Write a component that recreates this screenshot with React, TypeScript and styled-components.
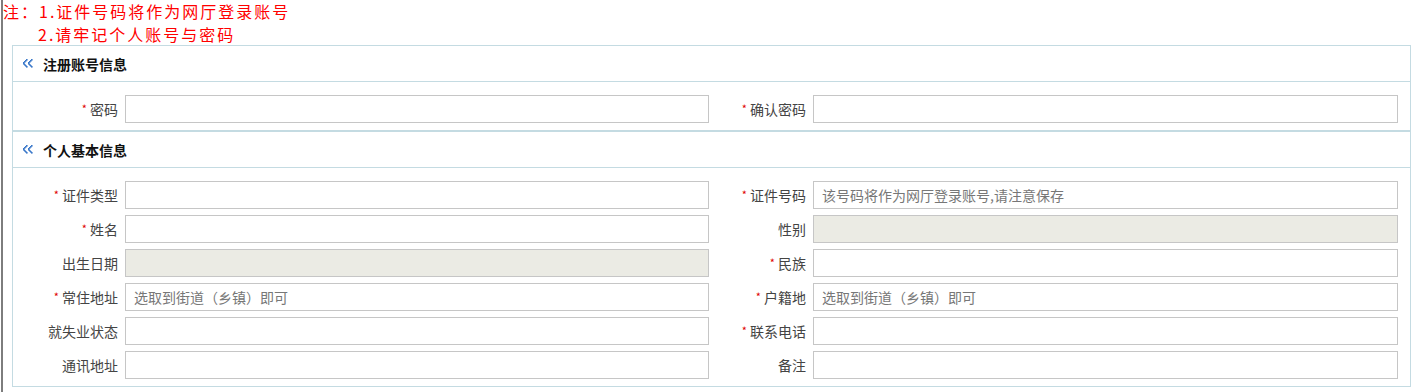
import styled, { createGlobalStyle } from 'styled-components';

const GlobalStyle = createGlobalStyle`
  html, body {
    margin: 0;
    padding: 0;
    background: #fff;
  }
  body {
    font-family: "Noto Sans CJK SC", "Liberation Sans", sans-serif;
  }
`;

type Field = {
  label: string;
  required?: boolean;
  placeholder?: string;
  disabled?: boolean;
};

const accountFields: Field[] = [
  { label: '密码', required: true },
  { label: '确认密码', required: true },
];

const personFields: Field[] = [
  { label: '证件类型', required: true },
  { label: '证件号码', required: true, placeholder: '该号码将作为网厅登录账号,请注意保存' },
  { label: '姓名', required: true },
  { label: '性别', disabled: true },
  { label: '出生日期', disabled: true },
  { label: '民族', required: true },
  { label: '常住地址', required: true, placeholder: '选取到街道（乡镇）即可' },
  { label: '户籍地', required: true, placeholder: '选取到街道（乡镇）即可' },
  { label: '就失业状态' },
  { label: '联系电话', required: true },
  { label: '通讯地址' },
  { label: '备注' },
];

// pixel-style double chevron, like the old gif icon
const Chevrons = () => (
  <svg width="10" height="9" viewBox="0 0 10 9">
    {[
      [3, 0], [2, 1], [1, 2], [0, 3], [0, 4], [1, 5], [2, 6], [3, 7],
      [8, 0], [7, 1], [6, 2], [5, 3], [5, 4], [6, 5], [7, 6], [8, 7],
    ].map(([x, y], i) => (
      <rect key={i} x={x} y={y} width="1.6" height="1.6" fill="#3a78c9" />
    ))}
  </svg>
);

const Section = ({ title, fields }: { title: string; fields: Field[] }) => (
  <Box>
    <SectionHead>
      <Chevrons />
      <span>{title}</span>
    </SectionHead>
    <FormGrid>
      {fields.map((f) => (
        <FieldPair key={f.label} field={f} />
      ))}
    </FormGrid>
  </Box>
);

const FieldPair = ({ field }: { field: Field }) => (
  <>
    <Label>
      {field.required && <Star>*</Star>}
      {field.label}
    </Label>
    <Input $disabled={field.disabled}>
      {field.placeholder && <Placeholder>{field.placeholder}</Placeholder>}
    </Input>
  </>
);

const App = () => {
  return (
    <Page>
      <GlobalStyle />
      <Note>
        <NoteLine>注：1.证件号码将作为网厅登录账号</NoteLine>
        <NoteLine $indent>2.请牢记个人账号与密码</NoteLine>
      </Note>
      <Panel>
        <Section title="注册账号信息" fields={accountFields} />
        <Section title="个人基本信息" fields={personFields} />
      </Panel>
    </Page>
  );
};

const Page = styled.div`
  margin-left: 1px;
  border-left: 2px solid #7d7d7d;
  min-height: 392px;
  box-sizing: border-box;
`;

const Note = styled.div`
  color: #ff0000;
  font-size: 16px;
  letter-spacing: 2px;
`;

const NoteLine = styled.div<{ $indent?: boolean }>`
  line-height: 22px;
  padding-left: ${(p) => (p.$indent ? '35px' : '0')};
  margin-top: ${(p) => (p.$indent ? '1px' : '0')};
`;

const Panel = styled.div`
  margin-left: 9px;
  width: 1399px;
  box-sizing: border-box;
`;

const Box = styled.div`
  border: 1px solid #c4dbe2;
`;

const SectionHead = styled.div`
  height: 35px;
  border-bottom: 1px solid #c4dbe2;
  display: flex;
  align-items: center;
  gap: 10px;
  padding-left: 10px;
  font-size: 14px;
  font-weight: bold;
  color: #111;
`;

const FormGrid = styled.div`
  display: grid;
  grid-template-columns: 112px 584px 104px 585px;
  grid-auto-rows: 28px;
  row-gap: 6px;
  padding: 13px 0 7px;
`;

const Label = styled.div`
  display: flex;
  align-items: center;
  justify-content: flex-end;
  padding-right: 7px;
  font-size: 14px;
  color: #444;
`;

const Star = styled.span`
  color: #e00000;
  font-size: 11px;
  margin-right: 3px;
  position: relative;
  top: -1px;
`;

const Input = styled.div<{ $disabled?: boolean }>`
  box-sizing: border-box;
  height: 28px;
  border: 1px solid #c6c6c6;
  background: ${(p) => (p.$disabled ? '#ebebe4' : '#fff')};
  display: flex;
  align-items: center;
  padding: 0 8px;
`;

const Placeholder = styled.span`
  font-size: 14px;
  color: #777;
`;

export default App;
